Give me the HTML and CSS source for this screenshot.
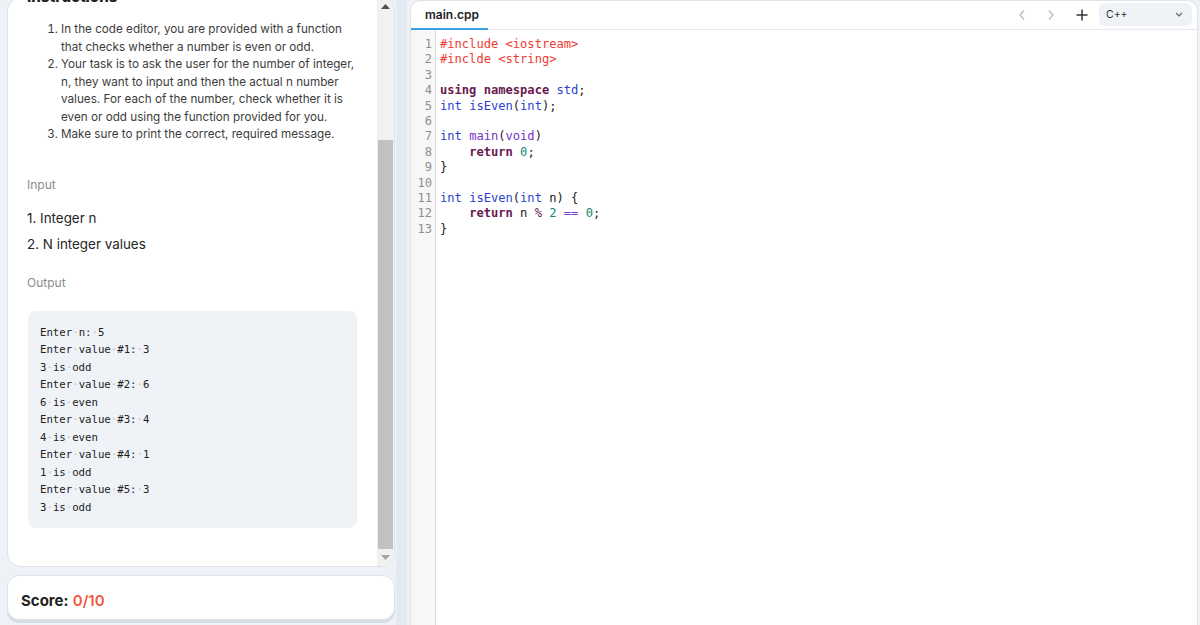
FILE: index.html
```html
<!DOCTYPE html>
<html>
<head>
<meta charset="utf-8">
<link rel="stylesheet" href="styles.css">
</head>
<body>
<div class="app">
  <div class="left-col">
    <div class="card">
      <div class="scroll-view">
        <div class="scroll-content">
          <h2 class="heading">Instructions</h2>
          <ol class="steps">
            <li>In the code editor, you are provided with a function<br>that checks whether a number is even or odd.</li>
            <li>Your task is to ask the user for the number of integer,<br>n, they want to input and then the actual n number<br>values. For each of the number, check whether it is<br>even or odd using the function provided for you.</li>
            <li>Make sure to print the correct, required message.</li>
          </ol>
          <div class="label label-input">Input</div>
          <div class="io-line first">1. Integer n</div>
          <div class="io-line">2. N integer values</div>
          <div class="label label-output">Output</div>
          <pre class="sample">Enter<span class="ws">·</span>n:<span class="ws">·</span>5
Enter<span class="ws">·</span>value<span class="ws">·</span>#1:<span class="ws">·</span>3
3<span class="ws">·</span>is<span class="ws">·</span>odd
Enter<span class="ws">·</span>value<span class="ws">·</span>#2:<span class="ws">·</span>6
6<span class="ws">·</span>is<span class="ws">·</span>even
Enter<span class="ws">·</span>value<span class="ws">·</span>#3:<span class="ws">·</span>4
4<span class="ws">·</span>is<span class="ws">·</span>even
Enter<span class="ws">·</span>value<span class="ws">·</span>#4:<span class="ws">·</span>1
1<span class="ws">·</span>is<span class="ws">·</span>odd
Enter<span class="ws">·</span>value<span class="ws">·</span>#5:<span class="ws">·</span>3
3<span class="ws">·</span>is<span class="ws">·</span>odd</pre>
        </div>
      </div>
      <div class="scrollbar">
        <div class="sb-btn"><svg width="9" height="5" viewBox="0 0 9 5"><path d="M0 5 L4.5 0 L9 5 Z" fill="#505050"/></svg></div>
        <div class="sb-track">
          <div class="sb-spacer"></div>
          <div class="sb-thumb"></div>
        </div>
        <div class="sb-btn"><svg width="9" height="5" viewBox="0 0 9 5"><path d="M0 0 L4.5 5 L9 0 Z" fill="#a3a3a3"/></svg></div>
      </div>
    </div>
    <div class="score-card">
      <span class="score-label">Score:</span> <span class="score-value">0/10</span>
    </div>
  </div>
  <div class="resizer"></div>
  <div class="editor">
    <div class="tabbar">
      <div class="tab">main.cpp</div>
      <div class="tab-tools">
        <svg class="nav-ico" width="8" height="12" viewBox="0 0 8 12"><path d="M6 1.5 L2 6 L6 10.5" fill="none" stroke="#bdbdbd" stroke-width="1.3"/></svg>
        <svg class="nav-ico" width="8" height="12" viewBox="0 0 8 12"><path d="M2 1.5 L6 6 L2 10.5" fill="none" stroke="#bdbdbd" stroke-width="1.3"/></svg>
        <svg class="plus-ico" width="12" height="12" viewBox="0 0 12 12"><path d="M6 0.5 V11.5 M0.5 6 H11.5" stroke="#333" stroke-width="1.5"/></svg>
        <div class="lang-select">
          <span>C++</span>
          <svg width="8" height="5" viewBox="0 0 8 5"><path d="M1 1 L4 4 L7 1" fill="none" stroke="#666" stroke-width="1.2"/></svg>
        </div>
      </div>
    </div>
    <div class="code-area">
      <div class="gutter"><div>1</div><div>2</div><div>3</div><div>4</div><div>5</div><div>6</div><div>7</div><div>8</div><div>9</div><div>10</div><div>11</div><div>12</div><div>13</div></div>
      <pre class="code"><span class="pp">#include &lt;iostream&gt;</span>
<span class="pp">#inclde &lt;string&gt;</span>

<span class="kw">using</span> <span class="kw">namespace</span> <span class="ty">std</span>;
<span class="ty">int</span> <span class="ty">isEven</span>(<span class="ty">int</span>);

<span class="ty">int</span> <span class="fn">main</span>(<span class="fn">void</span>)
    <span class="kw">return</span> <span class="nu">0</span>;
}

<span class="ty">int</span> <span class="ty">isEven</span>(<span class="ty">int</span> n) {
    <span class="kw">return</span> n <span class="op">%</span> <span class="nu">2</span> <span class="op2">==</span> <span class="nu">0</span>;
}</pre>
    </div>
  </div>
</div>
</body>
</html>
```

FILE: styles.css
```css
* { box-sizing: border-box; }
html, body { margin: 0; padding: 0; }
body {
  width: 1200px;
  height: 625px;
  overflow: hidden;
  background: #eef2f6;
  font-family: Inter, "Noto Sans", sans-serif;
  color: #333;
}
.app {
  display: flex;
  height: 625px;
}
.left-col {
  width: 388px;
  margin-left: 7px;
  display: flex;
  flex-direction: column;
  gap: 8px;
  padding-bottom: 5px;
}
.card {
  flex: 1;
  margin-top: -3px;
  background: #fff;
  border: 1px solid #dce3ea;
  border-radius: 14px;
  display: flex;
  overflow: hidden;
}
.scroll-view {
  flex: 1;
  overflow: hidden;
  padding: 0 20px 0 19px;
}
.scroll-content {
  margin-top: -10px;
}
.heading {
  margin: 0;
  font-size: 15px;
  line-height: 18px;
  font-weight: 800;
  color: #222;
}
.steps {
  margin: 15px 0 0 0;
  padding-left: 34px;
  font-size: 11.7px;
  line-height: 17.5px;
  color: #3d3d3d;
}
.label {
  font-size: 12px;
  line-height: 16px;
  color: #8c8c8c;
}
.label-input { margin-top: 33px; }
.label-output { margin-top: 22px; }
.io-line {
  font-size: 13.4px;
  line-height: 18px;
  color: #252525;
  margin-top: 8px;
}
.io-line.first { margin-top: 16px; }
.sample {
  margin: 20px 0 0 1px;
  background: #eff3f8;
  border-radius: 8px;
  padding: 13px 12px 12px;
  font-family: "DejaVu Sans Mono", monospace;
  font-size: 10.7px;
  line-height: 17.5px;
  color: #222;
}
.ws { color: #b9c0c8; }
.scrollbar {
  width: 17px;
  background: #f1f1f1;
  display: flex;
  flex-direction: column;
}
.sb-btn {
  height: 17px;
  display: flex;
  align-items: center;
  justify-content: center;
}
.sb-track {
  flex: 1;
  display: flex;
  flex-direction: column;
}
.sb-spacer { height: 125px; }
.sb-thumb {
  flex: 1;
  margin: 0 1px;
  background: #c1c1c1;
}
.score-card {
  height: 45px;
  background: #fff;
  border: 1px solid #dce3ea;
  border-radius: 12px;
  box-shadow: 0 3px 0 #d5dde5;
  padding: 15px 0 0 13px;
  font-size: 15px;
  line-height: 20px;
}
.score-label { font-weight: 700; color: #222; }
.score-value { font-weight: 600; color: #f05a45; }
.resizer {
  width: 14px;
  margin-left: 1px;
  background: linear-gradient(to right, #e6ecf2 0 1px, #e2e9f0 1px 11px, #eef2f6 11px);
}
.editor {
  flex: 1;
  margin-right: 2px;
  background: #fff;
  border: 1px solid #dde3e9;
  border-bottom: none;
  border-radius: 10px 10px 0 0;
  display: flex;
  flex-direction: column;
  overflow: hidden;
}
.tabbar {
  height: 29px;
  display: flex;
  justify-content: space-between;
  align-items: stretch;
  border-bottom: 1px solid #e3e6ea;
}
.tab {
  width: 77px;
  padding-left: 14px;
  display: flex;
  align-items: center;
  font-size: 12px;
  font-weight: 600;
  color: #222;
  border-bottom: 2px solid #3aa0e0;
  margin-bottom: -1px;
}
.tab-tools {
  display: flex;
  align-items: center;
  padding-right: 5px;
}
.nav-ico { margin-right: 21px; }
.plus-ico { margin: 0 11px 0 0; }
.lang-select {
  width: 93px;
  height: 23px;
  margin-top: -2px;
  background: #eef3f8;
  border-radius: 6px;
  display: flex;
  align-items: center;
  justify-content: space-between;
  padding: 0 9px 0 7px;
  font-size: 10.5px;
  color: #333;
}
.code-area {
  flex: 1;
  display: flex;
}
.gutter {
  width: 25px;
  background: #f7f7f7;
  border-right: 1px solid #dcdcdc;
  padding: 7px 3px 0 0;
  text-align: right;
  font-family: "DejaVu Sans Mono", monospace;
  font-size: 12.1px;
  line-height: 15.4px;
  color: #8f8f8f;
}
.code {
  margin: 0;
  padding: 7px 0 0 4px;
  font-family: "DejaVu Sans Mono", monospace;
  font-size: 12.1px;
  line-height: 15.4px;
  color: #222;
}
.pp { color: #ee3b30; }
.kw { color: #6a1850; font-weight: bold; }
.ty { color: #2c3fd0; }
.fn { color: #7433c8; }
.nu { color: #168678; }
.op { color: #6a1850; }
.op2 { color: #7433c8; }
```
